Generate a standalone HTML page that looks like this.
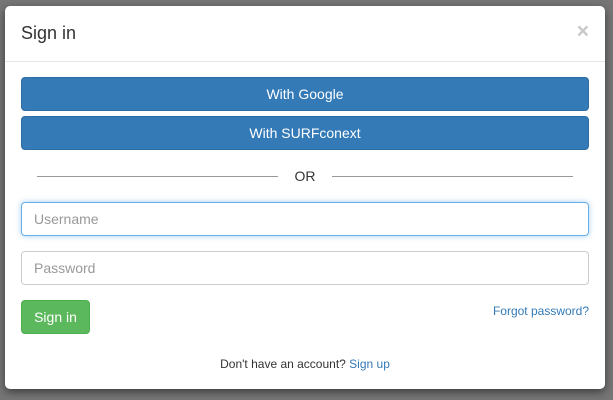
<!DOCTYPE html>
<html><head><style>
body{margin:0;width:613px;height:400px;background:#767676;font-family:"Liberation Sans",sans-serif;position:relative;overflow:hidden}
.m{position:absolute;left:5px;top:6px;width:600px;height:383px;background:#fff;border-radius:5px;box-shadow:0 3px 9px rgba(0,0,0,.5)}
.h{position:absolute;left:0;top:0;width:600px;height:55px;border-bottom:1px solid #e5e5e5}
.h span{position:absolute;left:16px;top:17px;font-size:18px;color:#333}
.x{position:absolute;right:16px;top:14px;font-size:21px;font-weight:bold;color:#c8c8c8}
.b{position:absolute;left:16px;width:566px;height:32px;background:#337ab7;border:1px solid #2e6da4;border-radius:4px;color:#fff;font-size:14px;text-align:center;line-height:32px}
.or{position:absolute;top:162px;left:0;width:600px;text-align:center;font-size:14px;color:#333}
.ln{position:absolute;top:170px;height:1px;background:#999}
.i{position:absolute;left:16px;width:554px;height:32px;border:1px solid #ccc;border-radius:4px;padding-left:12px;font-size:14px;color:#999;line-height:32px}
.s{position:absolute;left:16px;top:294px;width:67px;height:32px;background:#5cb85c;border:1px solid #4cae4c;border-radius:4px;color:#fff;font-size:14px;text-align:center;line-height:32px}
a{color:#337ab7;text-decoration:none}
</style></head><body>
<div class="m">
<div class="h"><span>Sign in</span><div class="x">×</div></div>
<div class="b" style="top:71px">With Google</div>
<div class="b" style="top:110px">With SURFconext</div>
<div class="ln" style="left:32px;width:241px"></div>
<div class="ln" style="left:327px;width:241px"></div>
<div class="or">OR</div>
<div class="i" style="top:196px;border-color:#66afe9;box-shadow:0 0 6px rgba(102,175,233,.6)">Username</div>
<div class="i" style="top:245px">Password</div>
<div class="s">Sign in</div>
<a style="position:absolute;right:16px;top:298px;font-size:12px">Forgot password?</a>
<div style="position:absolute;top:351px;width:600px;text-align:center;font-size:12px;color:#333">Don't have an account? <a>Sign up</a></div>
</div>
</body></html>
